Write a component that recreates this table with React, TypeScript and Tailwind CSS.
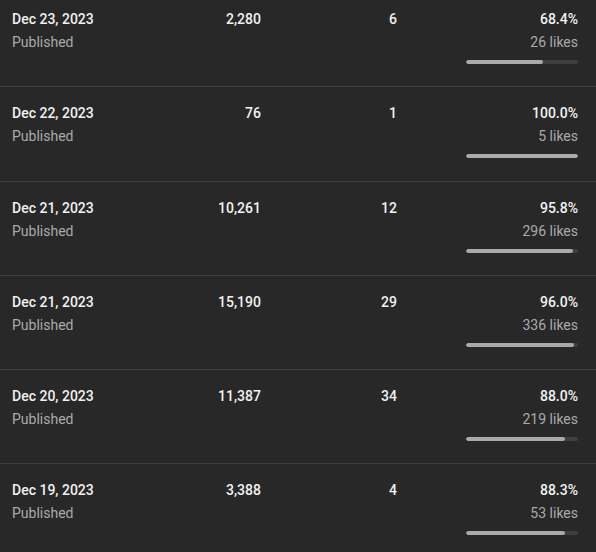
const rows = [
  { date: "Dec 23, 2023", views: "2,280", comments: "6", pct: 68.4, likes: "26 likes" },
  { date: "Dec 22, 2023", views: "76", comments: "1", pct: 100.0, likes: "5 likes" },
  { date: "Dec 21, 2023", views: "10,261", comments: "12", pct: 95.8, likes: "296 likes" },
  { date: "Dec 21, 2023", views: "15,190", comments: "29", pct: 96.0, likes: "336 likes" },
  { date: "Dec 20, 2023", views: "11,387", comments: "34", pct: 88.0, likes: "219 likes" },
  { date: "Dec 19, 2023", views: "3,388", comments: "4", pct: 88.3, likes: "53 likes" },
]

export default function App() {
  return (
    <div className="w-[596px] h-[552px] overflow-hidden bg-[#282828] font-['Roboto',sans-serif] text-[14px]">
      <div className="-mt-[7px]">
        {rows.map((r, i) => (
          <div key={i} className="flex h-[94.3px] border-b border-[#3e3e3e] pl-3 pr-[18px] pt-4">
            <div className="w-[160px]">
              <div className="leading-5 font-medium text-[#f1f1f1]">{r.date}</div>
              <div className="mt-[3px] leading-5 text-[#aaaaaa]">Published</div>
            </div>
            <div className="w-[89px] text-right leading-5 font-medium text-[#f1f1f1]">{r.views}</div>
            <div className="w-[136px] text-right leading-5 font-medium text-[#f1f1f1]">{r.comments}</div>
            <div className="flex-1 flex flex-col items-end">
              <div className="leading-5 font-medium text-[#f1f1f1]">{r.pct.toFixed(1)}%</div>
              <div className="mt-[3px] leading-5 text-[#aaaaaa]">{r.likes}</div>
              <div className="mt-2 h-1 w-[112px] rounded-full bg-[#3f3f3f] overflow-hidden">
                <div className="h-full rounded-full bg-[#aaaaaa]" style={{ width: `${r.pct}%` }} />
              </div>
            </div>
          </div>
        ))}
      </div>
    </div>
  )
}
